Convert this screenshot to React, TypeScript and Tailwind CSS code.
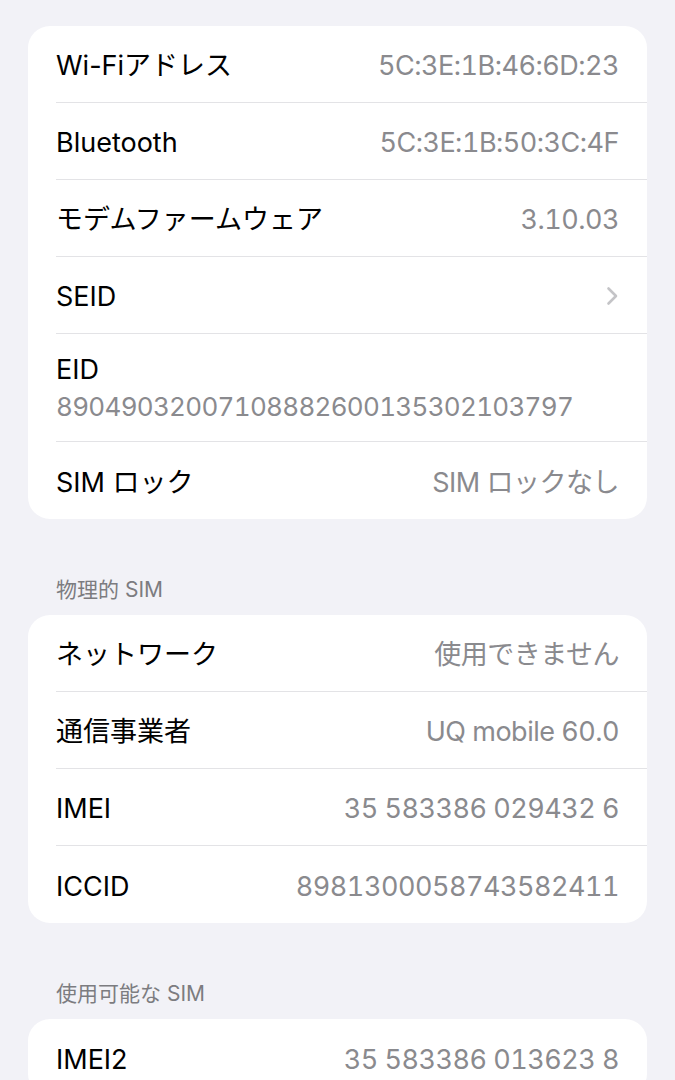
const font = { fontFamily: '"Inter", "Noto Sans CJK JP", sans-serif' };

type Row = { label: string; value?: string; chevron?: boolean; stacked?: boolean };

const general: Row[] = [
  { label: "Wi-Fiアドレス", value: "5C:3E:1B:46:6D:23" },
  { label: "Bluetooth", value: "5C:3E:1B:50:3C:4F" },
  { label: "モデムファームウェア", value: "3.10.03" },
  { label: "SEID", chevron: true },
  { label: "EID", value: "89049032007108882600135302103797", stacked: true },
  { label: "SIM ロック", value: "SIM ロックなし" },
];

const physical: Row[] = [
  { label: "ネットワーク", value: "使用できません" },
  { label: "通信事業者", value: "UQ mobile 60.0" },
  { label: "IMEI", value: "35 583386 029432 6" },
  { label: "ICCID", value: "8981300058743582411" },
];

const available: Row[] = [{ label: "IMEI2", value: "35 583386 013623 8" }];

function Chevron() {
  return (
    <svg width="13" height="20" viewBox="0 0 13 20" fill="none" className="-mt-[3px]">
      <path d="M2.5 2.5 L10 10 L2.5 17.5" stroke="#c4c4c7" strokeWidth="2.6" strokeLinecap="round" strokeLinejoin="round" />
    </svg>
  );
}

function Card({ rows }: { rows: Row[] }) {
  return (
    <div className="rounded-[22px] bg-white">
      {rows.map((r, i) => {
        const last = i === rows.length - 1;
        return (
          <div key={r.label} className="pl-[28px]">
            {r.stacked ? (
              <div className={`flex h-[108px] flex-col justify-center pr-[28px] ${last ? "" : "border-b border-[#e3e3e6]"}`}>
                <span className="text-[27px] leading-[37px] text-black">{r.label}</span>
                <span className="text-[26px] leading-[37px] tracking-[-0.7px] tabular-nums text-[#8a8a8e]">{r.value}</span>
              </div>
            ) : (
              <div className={`flex h-[77px] items-center justify-between pt-[5px] pr-[28px] ${last ? "" : "border-b border-[#e3e3e6]"}`}>
                <span className="text-[27px] text-black">{r.label}</span>
                {r.chevron ? (
                  <Chevron />
                ) : (
                  <span className="text-[27px] tracking-[-0.5px] tabular-nums text-[#8a8a8e]">{r.value}</span>
                )}
              </div>
            )}
          </div>
        );
      })}
    </div>
  );
}

function Header({ children }: { children: string }) {
  return (
    <div className="mt-[59px] mb-[13px] pl-[28px] text-[21px] leading-[24px] text-[#7c7c80]">{children}</div>
  );
}

export default function App() {
  return (
    <div className="min-h-screen bg-[#f2f2f7] px-[28px] pt-[26px]" style={font}>
      <Card rows={general} />
      <Header>物理的 SIM</Header>
      <Card rows={physical} />
      <Header>使用可能な SIM</Header>
      <Card rows={available} />
    </div>
  );
}
